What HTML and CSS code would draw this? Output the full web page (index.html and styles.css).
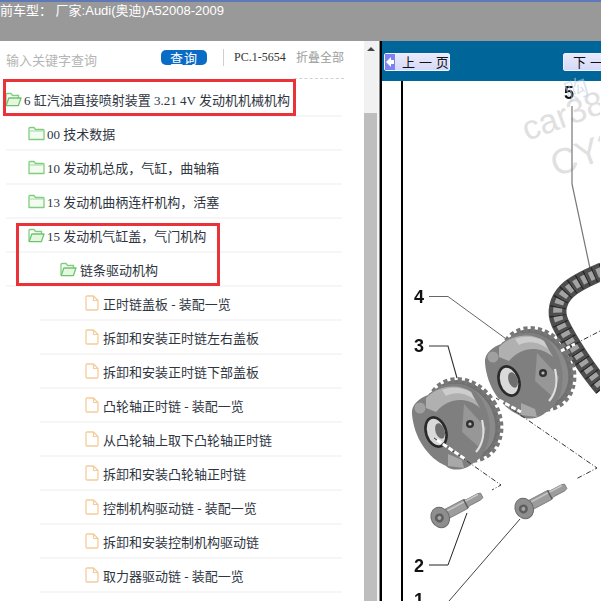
FILE: index.html
```html
<!DOCTYPE html>
<html>

<head>
    <meta charset="utf-8">
    <title>Catalog</title>
    <link rel="stylesheet" href="styles.css">
</head>

<body>
    <svg class="defs">
        <defs>
            <filter id="soft"><feGaussianBlur stdDeviation="0.45"/></filter>
            <symbol id="folderOpen" viewBox="0 0 17 15">
                <path d="M1 13V2.5C1 1.8 1.4 1.5 2 1.5H6L7.5 3.5H13.5V6" fill="#fff" stroke="#7fce7f" stroke-width="1.3"/>
                <path d="M1.2 13.6L3.8 6H16L13.4 13.6Z" fill="#e6f6e0" stroke="#6cc46c" stroke-width="1.3" stroke-linejoin="round"/>
            </symbol>
            <symbol id="folderShut" viewBox="0 0 17 15">
                <path d="M1 13.5V2.5C1 1.8 1.4 1.5 2 1.5H6L7.5 3.5H15.2C15.8 3.5 16 3.9 16 4.4V13.5Z" fill="#f4fbf0" stroke="#7fce7f" stroke-width="1.3" stroke-linejoin="round"/>
                <path d="M1 5H16" stroke="#9ddb9d" stroke-width="1"/>
            </symbol>
            <symbol id="fileIcon" viewBox="0 0 14 16">
                <path d="M1 2C1 1.3 1.4 1 2 1H8.5L13 5.5V14C13 14.7 12.6 15 12 15H2C1.4 15 1 14.7 1 14Z" fill="#fff" stroke="#f4cd9b" stroke-width="1.3" stroke-linejoin="round"/>
                <path d="M8.5 1V5.5H13" fill="none" stroke="#f4cd9b" stroke-width="1.2"/>
            </symbol>
            <g id="gear">
                <ellipse cx="8" cy="-2" rx="34" ry="42" transform="rotate(-32 8 -2)" fill="#6f6f6f" stroke="#777" stroke-width="6" stroke-dasharray="4 3"/>
                <ellipse cx="7" cy="-2" rx="30" ry="38" transform="rotate(-32 7 -2)" fill="#8a8a8a"/>
                <path d="M-44 -8C-45 -18 -36 -24 -28 -27C-16 -40 6 -42 18 -32C30 -20 36 -2 33 16C31 28 24 38 16 42C10 48 -4 50 -10 44C-28 36 -42 16 -44 -8Z" fill="#7f7f7f"/>
                <path d="M-30 -24C-16 -38 4 -38 15 -30L24 -14C10 -26 -8 -24 -20 -10L-30 -14Z" fill="#b0b0b0"/>
                <path d="M-14 -32C-4 -36 8 -34 15 -30L19 -22C8 -30 -2 -30 -10 -26Z" fill="#cdcdcd"/>
                <circle cx="-36" cy="-14" r="5.5" fill="#a0a0a0"/>
                <path d="M8 -18L30 6L24 26L6 10Z" fill="#979797"/>
                <path d="M-8 32L6 38L8 46L-8 44Z" fill="#a8a8a8"/>
                <circle cx="14" cy="2" r="4" fill="#333"/>
                <circle cx="14" cy="2" r="1.6" fill="#bbb"/>
                <path d="M26 -2C29 10 27 22 20 30" fill="none" stroke="#dedede" stroke-width="2.2"/>
                <ellipse cx="-20" cy="10" rx="10" ry="15" transform="rotate(-18 -20 10)" fill="#d9d9d9" stroke="#2a2a2a" stroke-width="2.6"/>
                <ellipse cx="-16" cy="9" rx="4.5" ry="8" transform="rotate(-18 -16 9)" fill="#6e6e6e"/>
            </g>
            <g id="bolt">
                <path d="M6 -4.5L28 -4.5L31 -3H44L47 -2V3L44 4H31L28 5.5H6Z" fill="#9c9c9c" stroke="#777" stroke-width=".8"/>
                <path d="M6 -2H44" stroke="#c6c6c6" stroke-width="1.6"/>
                <path d="M29 -4.5V5.5" stroke="#5c5c5c" stroke-width="1.5"/>
                <ellipse cx="4" cy="0.5" rx="3.5" ry="9.5" fill="#6f6f6f"/>
                <ellipse cx="0" cy="0.5" rx="9" ry="10.5" fill="#8e8e8e" stroke="#6a6a6a"/>
                <circle cx="-1" cy="0.5" r="4.5" fill="#5f5f5f"/>
                <circle cx="-1" cy="0.5" r="2" fill="#a5a5a5"/>
            </g>
        </defs>
    </svg>

    <div class="topbar">前车型： 厂家:Audi(奥迪)A52008-2009</div>

    <div class="main">
        <div class="sidebar">
            <div class="searchRow">
                <span class="keyword">输入关键字查询</span>
                <button class="searchBtn">查询</button>
                <span class="divider"></span>
                <span class="pageCount">PC.1-5654</span>
                <span class="collapse">折叠全部</span>
            </div>
            <div class="dashLine"></div>

            <div class="tree">
                <div class="row lv0"><svg class="icon"><use href="#folderOpen"/></svg>6 缸汽油直接喷射装置 3.21 4V 发动机机械机构</div>
                <div class="row lv1"><svg class="icon"><use href="#folderShut"/></svg>00 技术数据</div>
                <div class="row lv1"><svg class="icon"><use href="#folderShut"/></svg>10 发动机总成，气缸，曲轴箱</div>
                <div class="row lv1"><svg class="icon"><use href="#folderShut"/></svg>13 发动机曲柄连杆机构，活塞</div>
                <div class="row lv1"><svg class="icon"><use href="#folderOpen"/></svg>15 发动机气缸盖，气门机构</div>
                <div class="row lv2"><svg class="icon"><use href="#folderOpen"/></svg>链条驱动机构</div>
                <div class="row lv3"><svg class="icon file"><use href="#fileIcon"/></svg>正时链盖板 - 装配一览</div>
                <div class="row lv3"><svg class="icon file"><use href="#fileIcon"/></svg>拆卸和安装正时链左右盖板</div>
                <div class="row lv3"><svg class="icon file"><use href="#fileIcon"/></svg>拆卸和安装正时链下部盖板</div>
                <div class="row lv3"><svg class="icon file"><use href="#fileIcon"/></svg>凸轮轴正时链 - 装配一览</div>
                <div class="row lv3"><svg class="icon file"><use href="#fileIcon"/></svg>从凸轮轴上取下凸轮轴正时链</div>
                <div class="row lv3"><svg class="icon file"><use href="#fileIcon"/></svg>拆卸和安装凸轮轴正时链</div>
                <div class="row lv3"><svg class="icon file"><use href="#fileIcon"/></svg>控制机构驱动链 - 装配一览</div>
                <div class="row lv3"><svg class="icon file"><use href="#fileIcon"/></svg>拆卸和安装控制机构驱动链</div>
                <div class="row lv3"><svg class="icon file"><use href="#fileIcon"/></svg>取力器驱动链 - 装配一览</div>
            </div>

            <div class="mark markOne"></div>
            <div class="mark markTwo"></div>
        </div>

        <div class="scrollbar">
            <div class="scrollTrack"><span class="arrowUp"></span></div>
            <div class="scrollThumb"></div>
        </div>
        <div class="gutter"></div>

        <div class="viewer">
            <div class="pager">
                <button class="pageBtn prev"><span class="arrowBox"></span>上 一 页</button>
                <button class="pageBtn next">下 一 页</button>
            </div>
            <div class="sheet">
                <svg class="drawing" width="218" height="520" viewBox="383 81 218 520">
                    <path d="M403 81V601" stroke="#000" stroke-width="2" fill="none"/>

                    <g class="watermark">
                        <text x="528" y="141" transform="rotate(-20 528 141)" font-size="34">car38</text>
                        <text x="557" y="177" transform="rotate(-20 557 177)" font-size="36">CY2</text>
                    </g>

                    <path d="M573 106V184L592 273" stroke="#777" stroke-width="1.2" fill="none"/>
                    <path d="M430 296.5H449L510 341" stroke="#666" stroke-width="1" fill="none"/>
                    <path d="M430 346H449L458 378" stroke="#333" stroke-width="1.1" fill="none"/>
                    <path d="M430 565H449L468 513" stroke="#222" stroke-width="1" fill="none"/>
                    <path d="M450 601L521 519" stroke="#444" stroke-width="1" fill="none"/>

                    <g filter="url(#soft)">
                        <path class="chainBase" d="M604 271C585 279 574 285 568 291C559 300 556 312 561 323C570 342 590 372 604 388"/>
                        <path class="chainLink" d="M604 271C585 279 574 285 568 291C559 300 556 312 561 323C570 342 590 372 604 388"/>
                        <path class="chainPin" d="M604 271C585 279 574 285 568 291C559 300 556 312 561 323C570 342 590 372 604 388"/>

                        <use href="#gear" x="530" y="371"/>
                        <use href="#gear" x="457" y="422"/>

                        <use href="#bolt" transform="translate(441 517) rotate(-28)"/>
                        <use href="#bolt" transform="translate(525 508) rotate(-28)"/>
                    </g>

                    <path d="M562 351L576 344" stroke="#fff" stroke-width="3" stroke-dasharray="4 2"/>
                    <path d="M576 344L601 331" class="dash"/>
                    <path d="M497 398L598 468L577 479" class="dash"/>
                    <path d="M435 438L502 485L493 490" class="dash"/>
                    <path d="M500 400L522 412" stroke="#fff" stroke-width="3" stroke-dasharray="5 2"/>
                    <path d="M438 440L466 459" stroke="#fff" stroke-width="3" stroke-dasharray="5 2"/>

                    <g class="num">
                        <text x="565" y="99">5</text>
                        <text x="415" y="303">4</text>
                        <text x="415" y="352">3</text>
                        <text x="415" y="572">2</text>
                        <text x="415" y="606">1</text>
                    </g>
                </svg>
            </div>
            <div class="faint">购</div>
        </div>
    </div>
</body>

</html>
```

FILE: styles.css
```css
html, body {
    margin: 0;
    padding: 0;
    height: 601px;
    overflow: hidden;
}

body {
    display: flex;
    flex-direction: column;
    font-family: "Liberation Serif", "Noto Sans CJK SC", serif;
    color: #2f3642;
    background: #fff;
}

button {
    border: none;
    padding: 0;
}

.defs {
    width: 0;
    height: 0;
    display: block;
}

.topbar {
    height: 39px;
    border-top: 2px solid #5f78b8;
    background: #999999;
    color: #fff;
    font: 13px/17px "Liberation Sans", "Noto Sans CJK SC", sans-serif;
    white-space: nowrap;
}

.main {
    flex: 1;
    display: flex;
    min-height: 0;
}

/* left panel */
.sidebar {
    position: relative;
    width: 364px;
    overflow: hidden;
}

.searchRow {
    display: flex;
    align-items: center;
    height: 31px;
    padding: 2px 0 0 6px;
    box-sizing: border-box;
}

.keyword {
    width: 155px;
    margin-top: 5px;
    font: 13px/16px "Noto Sans CJK SC", sans-serif;
    color: #b5b5b5;
}

.searchBtn {
    width: 46px;
    height: 15px;
    background: #0b6cc6;
    border-radius: 5px;
    color: #fff;
    font: 13px/15px "Noto Sans CJK SC", sans-serif;
    letter-spacing: 1px;
}

.divider {
    width: 1px;
    height: 17px;
    margin: 0 10px 0 16px;
    background: #cfcfcf;
}

.pageCount {
    width: 62px;
    font-size: 12px;
    color: #333;
}

.collapse {
    font: 12px/16px "Noto Sans CJK SC", sans-serif;
    color: #9c9c9c;
    margin-top: -2px;
}

.dashLine {
    width: 50px;
    margin: 6px 0 0 294px;
    border-top: 1px dashed #c8d2da;
}

.tree {
    margin-top: 4px;
    width: 342px;
}

.row {
    display: flex;
    align-items: center;
    height: 32px;
    border-bottom: 2px solid #f6f6f6;
    font-size: 13px;
    white-space: pre;
}

.icon {
    width: 17px;
    height: 15px;
    margin-right: 2px;
    flex: none;
}

.icon.file {
    width: 14px;
    height: 16px;
    margin-right: 4px;
}

.lv0 {
    margin-left: 6px;
}

.lv0 .icon {
    margin-left: -1px;
}

.lv1 {
    margin-left: 6px;
    padding-left: 22px;
}

.lv2 {
    margin-left: 6px;
    padding-left: 54px;
}

.lv2 .icon {
    margin-right: 3px;
}

.lv3 {
    margin-left: 40px;
    padding-left: 45px;
}

.mark {
    position: absolute;
    border: 3px solid #ea3338;
    box-sizing: border-box;
}

.markOne {
    left: 3px;
    top: 38px;
    width: 293px;
    height: 37px;
}

.markTwo {
    left: 16px;
    top: 182px;
    width: 204px;
    height: 63px;
}

/* scrollbar */
.scrollbar {
    width: 13px;
    display: flex;
    flex-direction: column;
    background: #f1f1f1;
}

.scrollTrack {
    height: 72px;
    padding-top: 6px;
    box-sizing: border-box;
}

.arrowUp {
    display: block;
    width: 0;
    margin: 0 auto;
    border: 4px solid transparent;
    border-top: none;
    border-bottom: 4px solid #444;
}

.scrollThumb {
    flex: 1;
    background: #bebebe;
}

.gutter {
    width: 2px;
    background: #f4f4f4;
    border-right: 1px solid #8a8a8a;
}

/* right panel */
.viewer {
    position: relative;
    flex: 1;
    min-width: 0;
    border-left: 2px solid #000;
    overflow: hidden;
    display: flex;
    flex-direction: column;
}

.pager {
    height: 40px;
    flex: none;
    display: flex;
    justify-content: space-between;
    align-items: flex-start;
    padding: 12px 0 0 2px;
    box-sizing: border-box;
    background: #006699;
    overflow: hidden;
}

.pageBtn {
    display: flex;
    align-items: center;
    flex: none;
    height: 18px;
    border: 1px solid #eef0ff;
    border-radius: 2px;
    box-sizing: border-box;
    background: linear-gradient(#e9eafc, #d6d9f6);
    color: #111;
    font: 13px/16px "Noto Sans CJK SC", sans-serif;
    word-spacing: 1px;
    white-space: pre;
}

.prev {
    width: 66px;
}

.next {
    width: 66px;
    margin-right: -28px;
    padding-left: 9px;
}

.arrowBox {
    position: relative;
    width: 10px;
    height: 16px;
    margin-right: 7px;
    background: #7d82ee;
}

.arrowBox::before {
    content: "";
    position: absolute;
    left: 1px;
    top: 3px;
    border: 5px solid transparent;
    border-left: none;
    border-right: 5px solid #fff;
}

.arrowBox::after {
    content: "";
    position: absolute;
    left: 5px;
    top: 6px;
    width: 4px;
    height: 4px;
    background: #fff;
}

.sheet {
    flex: 1;
    min-height: 0;
    background: #fff;
}

.drawing {
    display: block;
}

.watermark text {
    font-family: "Liberation Sans", sans-serif;
    fill: #e0e0e0;
}

.chainBase,
.chainLink,
.chainPin {
    fill: none;
}

.chainBase {
    stroke: #4e4e4e;
    stroke-width: 18;
}

.chainLink {
    stroke: #a3a3a3;
    stroke-width: 9;
    stroke-dasharray: 6 2.5;
}

.chainPin {
    stroke: #262626;
    stroke-width: 16;
    stroke-dasharray: 1.3 7.2;
}

.dash {
    fill: none;
    stroke: #333;
    stroke-width: 1;
    stroke-dasharray: 5 2 1 2;
}

.num text {
    font: bold 18px "Liberation Sans", sans-serif;
    fill: #111;
}

.faint {
    position: absolute;
    left: 182px;
    top: 29px;
    font: 24px "Noto Sans CJK SC", sans-serif;
    color: rgba(190, 205, 225, .55);
    transform: rotate(-20deg);
}
```
